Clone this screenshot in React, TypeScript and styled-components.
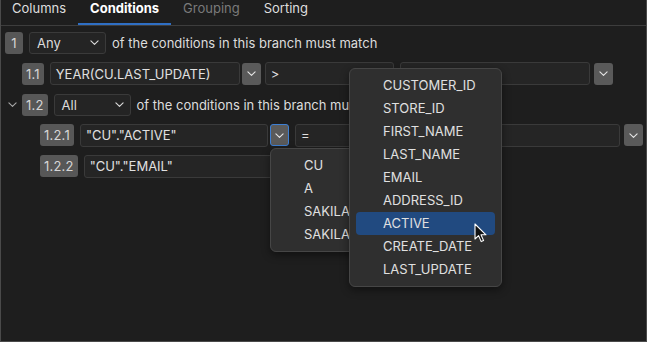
import * as React from 'react';
import styled, { createGlobalStyle, css } from 'styled-components';

const GlobalStyle = createGlobalStyle`
  html, body {
    margin: 0;
    padding: 0;
    background: #1e1e1e;
  }
  body {
    font-family: Inter, "Noto Sans", "Liberation Sans", sans-serif;
    font-size: 13px;
    color: #dcdcdc;
  }
`;

const Frame = styled.div`
  position: relative;
  width: 647px;
  height: 342px;
  box-sizing: border-box;
  background: #1e1e1e;
  border: 1px solid #4a4a4a;
  border-top: none;
  overflow: hidden;
`;

const TabBar = styled.div`
  display: flex;
  height: 25px;
  border-bottom: 1px solid #3d3d3d;
  margin: 0 -1px;
`;

const Tab = styled.div<{ $active?: boolean; $disabled?: boolean }>`
  padding: 0 12px;
  height: 25px;
  line-height: 17px;
  box-sizing: border-box;
  color: ${(p) => (p.$disabled ? '#7a7a7a' : '#dedede')};
  font-weight: ${(p) => (p.$active ? 700 : 400)};
  border-bottom: 2px solid ${(p) => (p.$active ? '#2f6fc4' : 'transparent')};
  ${(p) => p.$active && css`color: #ffffff;`}
`;

const Body = styled.div`
  display: flex;
  flex-direction: column;
  gap: 8.75px;
  padding: 6px 0 0 3px;
`;

const Row = styled.div<{ $indent: number }>`
  display: flex;
  align-items: center;
  height: 22px;
  gap: 6px;
  padding-left: ${(p) => p.$indent}px;
`;

const Expander = styled.div`
  width: 11px;
  margin-left: -15px;
  margin-right: -2px;
  display: flex;
  justify-content: center;
  color: #a8a8a8;
`;

const Badge = styled.div`
  height: 22px;
  padding: 0 4px;
  min-width: 18px;
  box-sizing: border-box;
  border-radius: 3px;
  background: #575757;
  color: #d6d6d6;
  display: flex;
  align-items: center;
  justify-content: center;
  font-size: 13px;
  letter-spacing: 0.2px;
`;

const Select = styled.div<{ $w: number }>`
  width: ${(p) => p.$w}px;
  height: 22px;
  box-sizing: border-box;
  border: 1px solid #3a3a3a;
  border-radius: 3px;
  background: #242424;
  display: flex;
  align-items: center;
  justify-content: space-between;
  padding: 0 6px 0 7px;
  color: #dcdcdc;
`;

const Field = styled.div<{ $w: number }>`
  width: ${(p) => p.$w}px;
  height: 23px;
  box-sizing: border-box;
  border: 1px solid #3a3a3a;
  border-radius: 3px;
  background: #252525;
  display: flex;
  align-items: center;
  padding-left: 5px;
  color: #e0e0e0;
  white-space: nowrap;
  overflow: hidden;
`;

const DropButton = styled.div<{ $focused?: boolean }>`
  width: 19px;
  height: 22px;
  box-sizing: border-box;
  border-radius: 3px;
  background: #5a5a5a;
  display: flex;
  align-items: center;
  justify-content: center;
  color: #e6e6e6;
  margin-left: -2px;
  border: ${(p) => (p.$focused ? '1.5px solid #3d7fd3' : 'none')};
`;

const FieldGroup = styled.div<{ $gap: number }>`
  display: flex;
  align-items: center;
  gap: ${(p) => p.$gap}px;
`;

const Caption = styled.span`
  color: #dcdcdc;
  white-space: nowrap;
`;

const Popup = styled.div<{ $x: number; $y: number; $w: number; $h: number }>`
  position: absolute;
  left: ${(p) => p.$x}px;
  top: ${(p) => p.$y}px;
  width: ${(p) => p.$w}px;
  height: ${(p) => p.$h}px;
  box-sizing: border-box;
  background: #2f2f2f;
  border: 1px solid #464646;
  border-radius: 6px;
  box-shadow: 0 3px 8px rgba(0, 0, 0, 0.45);
  padding: 5px 6px;
`;

const Item = styled.div<{ $selected?: boolean }>`
  height: 23px;
  line-height: 23px;
  padding-left: 27px;
  border-radius: 4px;
  color: #e0e0e0;
  white-space: nowrap;
  overflow: hidden;
  background: ${(p) => (p.$selected ? '#214a80' : 'transparent')};
`;

const Pointer = styled.svg`
  position: absolute;
  left: 473px;
  top: 223px;
`;

const Chevron = ({ size = 9 }: { size?: number }) => (
  <svg width={size} height={size * 0.6} viewBox="0 0 10 6" fill="none">
    <polyline points="1,1 5,5 9,1" stroke="currentColor" strokeWidth="1.2" strokeLinecap="round" strokeLinejoin="round" />
  </svg>
);

const columns = ['CUSTOMER_ID', 'STORE_ID', 'FIRST_NAME', 'LAST_NAME', 'EMAIL', 'ADDRESS_ID', 'ACTIVE', 'CREATE_DATE', 'LAST_UPDATE'];
const tables = ['CU', 'A', 'SAKILA', 'SAKILA'];

export default function App() {
  return (
    <>
      <GlobalStyle />
      <Frame>
        <TabBar>
          <Tab>Columns</Tab>
          <Tab $active>Conditions</Tab>
          <Tab $disabled>Grouping</Tab>
          <Tab>Sorting</Tab>
        </TabBar>
        <Body>
          <Row $indent={1}>
            <Badge>1</Badge>
            <Select $w={77}>
              <span>Any</span>
              <Chevron />
            </Select>
            <Caption>of the conditions in this branch must match</Caption>
          </Row>
          <Row $indent={18}>
            <Badge>1.1</Badge>
            <FieldGroup $gap={4}>
              <Field $w={190}>YEAR(CU.LAST_UPDATE)</Field>
              <DropButton><Chevron /></DropButton>
            </FieldGroup>
            <FieldGroup $gap={6}>
              <Field $w={129} style={{ marginLeft: -2 }}>&gt;</Field>
              <Field $w={190}></Field>
              <DropButton><Chevron /></DropButton>
            </FieldGroup>
          </Row>
          <Row $indent={18}>
            <Expander><Chevron /></Expander>
            <Badge>1.2</Badge>
            <Select $w={77}>
              <span>All</span>
              <Chevron />
            </Select>
            <Caption>of the conditions in this branch must match</Caption>
          </Row>
          <Row $indent={36}>
            <Badge>1.2.1</Badge>
            <FieldGroup $gap={4}>
              <Field $w={188}>"CU"."ACTIVE"</Field>
              <DropButton $focused><Chevron /></DropButton>
            </FieldGroup>
            <FieldGroup $gap={6}>
              <Field $w={129}>=</Field>
              <Field $w={190}></Field>
              <DropButton><Chevron /></DropButton>
            </FieldGroup>
          </Row>
          <Row $indent={36}>
            <Badge>1.2.2</Badge>
            <Field $w={190}>"CU"."EMAIL"</Field>
          </Row>
        </Body>

        <Popup $x={269} $y={148} $w={100} $h={104}>
          {tables.map((t, i) => (
            <Item key={i}>{t}</Item>
          ))}
        </Popup>

        <Popup $x={348} $y={68} $w={153} $h={219}>
          {columns.map((c) => (
            <Item key={c} $selected={c === 'ACTIVE'}>{c}</Item>
          ))}
        </Popup>

        <Pointer width="14" height="20" viewBox="0 0 14 20">
          <path d="M1 1 L1 16 L4.6 12.6 L7.2 18.6 L9.6 17.6 L7 11.8 L12 11.8 Z" fill="#111" stroke="#fff" strokeWidth="1.1" strokeLinejoin="round" />
        </Pointer>
      </Frame>
    </>
  );
}
